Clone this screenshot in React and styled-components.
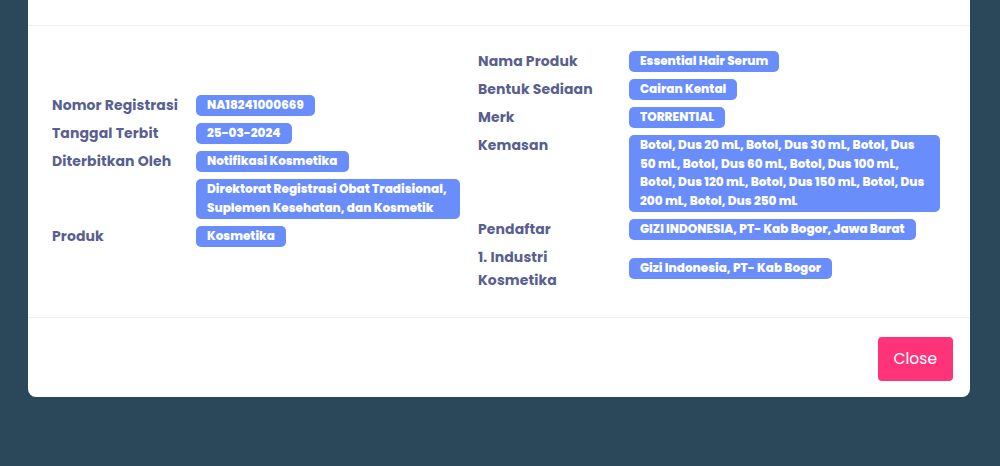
import React from 'react'
import styled, { createGlobalStyle } from 'styled-components'

const GlobalStyle = createGlobalStyle`
    html, body {
        margin: 0;
        padding: 0;
        background: #2a4859;
        font-family: Poppins, Inter, "Open Sans", sans-serif;
    }
`

const Page = styled.div`
    width: 1000px;
    height: 466px;
    padding: 0 30px 0 28px;
    box-sizing: border-box;
`

const Modal = styled.div`
    background: #fff;
    border-radius: 0 0 8px 8px;
`

const Header = styled.div`
    height: 25px;
    border-bottom: 1px solid #eef0f4;
`

const Body = styled.div`
    padding: 24px 24px 25px;
    display: grid;
    grid-template-columns: 426px 1fr;
    align-items: center;
`

const Column = styled.div`
    display: flex;
    flex-direction: column;
    gap: 3px;
    padding-top: ${(props) => props.$offset || 0}px;
`

const Row = styled.div`
    display: flex;
    align-items: ${(props) => (props.$center ? 'center' : 'flex-start')};
`

const Label = styled.div`
    flex: 0 0 ${(props) => props.$width}px;
    padding-right: 14px;
    box-sizing: border-box;
    font-size: 14px;
    font-weight: 700;
    line-height: 23px;
    letter-spacing: 0.1px;
    color: #595f8f;
`

const Value = styled.div`
    flex: 1;
    min-width: 0;
    display: flex;
    align-items: flex-start;
    padding-right: ${(props) => props.$pr || 0}px;
    padding-top: ${(props) => (props.$center ? 2 : 0)}px;
`

const Badge = styled.span`
    display: block;
    margin: 1px 0 3px;
    padding: 1.25px 11px;
    border-radius: 5px;
    background: #6a8dfc;
    color: #fff;
    font-size: 12px;
    font-weight: 800;
    line-height: 18.5px;
`

const Footer = styled.div`
    border-top: 1px solid #eef0f4;
    padding: 19px 17px 16px;
    display: flex;
    justify-content: flex-end;
`

const CloseButton = styled.button`
    height: 44px;
    padding: 0 16px;
    border: none;
    border-radius: 4px;
    background: #ff3478;
    color: #fff;
    font-family: Poppins, Inter, "Open Sans", sans-serif;
    font-size: 15.5px;
    font-weight: 400;
    cursor: pointer;
`

const left = [
    { label: 'Nomor Registrasi', value: 'NA18241000669' },
    { label: 'Tanggal Terbit', value: '25-03-2024' },
    { label: 'Diterbitkan Oleh', value: 'Notifikasi Kosmetika' },
    { label: '', value: 'Direktorat Registrasi Obat Tradisional, Suplemen Kesehatan, dan Kosmetik' },
    { label: 'Produk', value: 'Kosmetika' },
]

const right = [
    { label: 'Nama Produk', value: 'Essential Hair Serum' },
    { label: 'Bentuk Sediaan', value: 'Cairan Kental' },
    { label: 'Merk', value: 'TORRENTIAL' },
    {
        label: 'Kemasan',
        value: 'Botol, Dus 20 mL, Botol, Dus 30 mL, Botol, Dus 50 mL, Botol, Dus 60 mL, Botol, Dus 100 mL, Botol, Dus 120 mL, Botol, Dus 150 mL, Botol, Dus 200 mL, Botol, Dus 250 mL',
    },
    { label: 'Pendaftar', value: 'GIZI INDONESIA, PT- Kab Bogor, Jawa Barat' },
    { label: '1. Industri Kosmetika', value: 'Gizi Indonesia, PT- Kab Bogor', center: true },
]

const App = () => {
    return (
        <Page>
            <GlobalStyle />
            <Modal>
                <Header />
                <Body>
                    <Column $offset={2}>
                        {left.map((item, i) => (
                            <Row key={i} $center={item.center}>
                                <Label $width={144}>{item.label}</Label>
                                <Value $pr={18}>
                                    <Badge>{item.value}</Badge>
                                </Value>
                            </Row>
                        ))}
                    </Column>
                    <Column>
                        {right.map((item, i) => (
                            <Row key={i} $center={item.center}>
                                <Label $width={151}>{item.label}</Label>
                                <Value $pr={6} $center={item.center}>
                                    <Badge>{item.value}</Badge>
                                </Value>
                            </Row>
                        ))}
                    </Column>
                </Body>
                <Footer>
                    <CloseButton>Close</CloseButton>
                </Footer>
            </Modal>
        </Page>
    )
}

export default App
